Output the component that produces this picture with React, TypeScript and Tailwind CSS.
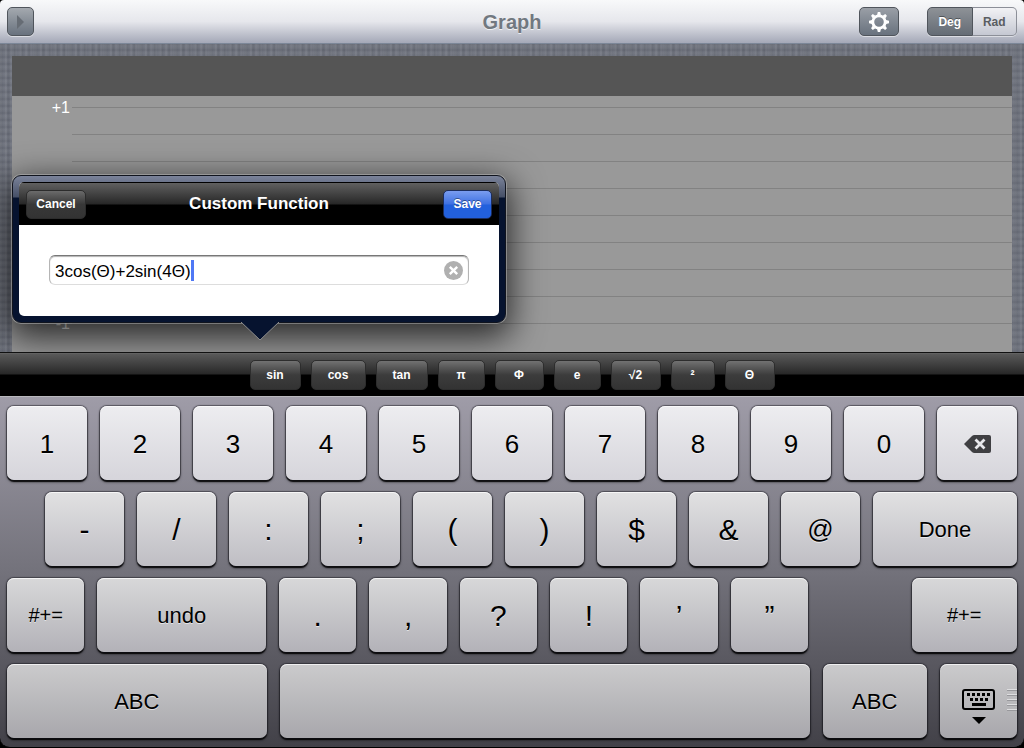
import React, { useState } from "react";
import clsx from "clsx";

const functionKeys = [
  { label: "sin", width: "w-[51px]" },
  { label: "cos", width: "w-[55px]" },
  { label: "tan", width: "w-[52px]" },
  { label: "π", width: "w-[47px]" },
  { label: "Φ", width: "w-[49px]" },
  { label: "e", width: "w-[47px]" },
  { label: "√2", width: "w-[50px]" },
  { label: "²", width: "w-[44px]" },
  { label: "Θ", width: "w-[50px]" },
];

const digits = ["1", "2", "3", "4", "5", "6", "7", "8", "9", "0"];
const symbols = ["-", "/", ":", ";", "(", ")", "$", "&", "@"];
const punctuation = [".", ",", "?", "!", "’", "”"];
const gridLines = [1, 2, 3, 4, 5, 6, 7, 8, 9];

// each keyboard row is a shade darker than the one above
const tones = {
  first: "from-[#ededf0] to-[#d6d5db] pt-[2px]",
  second: "from-[#e1e1e2] to-[#bfbec4]",
  third: "from-[#d8d8d9] to-[#b3b2b8]",
  fourth: "from-[#cbcbcc] to-[#a8a7ac]",
};

type KeyProps = {
  tone: keyof typeof tones;
  className?: string;
  label?: string;
  children?: React.ReactNode;
};

function Key({ tone, className, label, children }: KeyProps) {
  return (
    <button
      type="button"
      aria-label={label}
      className={clsx(
        "relative flex h-[74px] min-w-0 items-center justify-center rounded-[7px] bg-linear-to-b text-black",
        "shadow-[inset_0_1px_0_rgba(255,255,255,0.7),0_0_1px_1px_rgba(20,20,28,0.5),0_2px_1px_rgba(0,0,0,0.85),0_2px_3px_rgba(0,0,0,0.5)]",
        "[text-shadow:0_1px_0_rgba(255,255,255,0.6)]",
        tones[tone],
        className
      )}
    >
      {children}
    </button>
  );
}

function GearIcon() {
  const teeth = [0, 45, 90, 135, 180, 225, 270, 315];
  return (
    <svg viewBox="-10 -10 20 20" className="size-5">
      <circle r="6.2" fill="none" stroke="white" strokeWidth="2.800" />
      {teeth.map((angle) => (
        <path key={angle} d="M-1.900-7-1.200-10H1.200L1.900-7Z" fill="white" transform={`rotate(${angle})`} />
      ))}
    </svg>
  );
}

function BackspaceIcon() {
  return (
    <svg viewBox="0 0 27 18" className="h-[18px] w-[27px]">
      <path d="M0 9 8 1Q9 0 10.500 0H25Q27 0 27 2V16Q27 18 25 18H10.500Q9 18 8 17Z" fill="#3f3f42" />
      <path d="m11.500 4.500 9 9m0-9-9 9" stroke="#e8e8ec" strokeWidth="2.800" />
    </svg>
  );
}

function KeyboardIcon() {
  const upper = [5, 10, 15, 20, 25];
  const lower = [8, 13, 18, 23];
  return (
    <svg viewBox="0 0 33 36" className="mt-3 h-9 w-[33px]">
      <rect x="1" y="1" width="31" height="19" rx="2" fill="none" stroke="black" strokeWidth="2" />
      {upper.map((x) => (
        <rect key={x} x={x} y="4" width="3" height="3" />
      ))}
      {lower.map((x) => (
        <rect key={x} x={x} y="9" width="3" height="3" />
      ))}
      <rect x="10" y="14" width="14" height="3" />
      <path d="M10 28H24L17 35Z" />
    </svg>
  );
}

function Header() {
  return (
    <header className="grid h-11 grid-cols-[1fr_auto_1fr] items-center rounded-t-[4px] border-b border-[#7c8798] bg-linear-to-b from-[#f8f9fa] via-[#e6e7ec] to-[#a4a8b7] px-[7px]">
      <button
        type="button"
        aria-label="Show functions"
        className="flex h-[29px] w-[27px] items-center justify-center rounded-[5px] border border-[#50555c] bg-linear-to-b from-[#a4a9af] to-[#69727e] shadow-[0_1px_0_rgba(255,255,255,0.5)]"
      >
        <svg viewBox="0 0 7 14" className="h-[14px] w-[7px]">
          <path d="M0 0 7 7 0 14Z" fill="#666c74" />
        </svg>
      </button>
      <h1 className="text-[20px] font-bold text-[#717880] [text-shadow:0_1px_0_rgba(255,255,255,0.7)]">Graph</h1>
      <div className="flex items-center gap-7 justify-self-end">
        <button
          type="button"
          aria-label="Settings"
          className="flex h-[29px] w-10 items-center justify-center rounded-[5px] border border-[#50555c] bg-linear-to-b from-[#9a9fa6] to-[#69727e] shadow-[0_1px_0_rgba(255,255,255,0.5)]"
        >
          <GearIcon />
        </button>
        <div className="flex h-[29px] w-[90px] rounded-[5px] text-[12px] font-bold shadow-[0_1px_0_rgba(255,255,255,0.5)]">
          <button
            type="button"
            className="flex-1 rounded-l-[5px] border border-[#50555c] bg-linear-to-b from-[#8e9297] to-[#656c75] text-white [text-shadow:0_-1px_0_rgba(0,0,0,0.4)]"
          >
            Deg
          </button>
          <button
            type="button"
            className="flex-1 rounded-r-[5px] border border-l-0 border-[#8c8f98] bg-linear-to-b from-[#f2f2f5] to-[#c5c8d2] text-[#5a5d62]"
          >
            Rad
          </button>
        </div>
      </div>
    </header>
  );
}

function FunctionPopover() {
  const [value, setValue] = useState("3cos(Θ)+2sin(4Θ)");
  return (
    <section
      aria-label="Custom Function"
      className="absolute top-[131px] left-3 w-[494px] rounded-[9px] border border-[#10141e] bg-[linear-gradient(to_bottom,#7b839a_0px,#465067_21px,#06132f_22px)] p-[6px] shadow-[0_0_0_1px_rgba(190,190,190,0.5),0_10px_34px_4px_rgba(0,0,0,0.75)]"
    >
      <div className="overflow-hidden rounded-[5px] bg-white">
        <div className="grid h-[43px] grid-cols-[1fr_auto_1fr] items-center border-t border-black bg-[linear-gradient(to_bottom,#606060_0px,#272727_21px,#000_22px)] px-[7px]">
          <button
            type="button"
            className="h-[29px] w-[60px] rounded-[5px] border border-[#2c2c2c] bg-linear-to-b from-[#6b6b6b] via-[#383838] to-[#333] text-[12px] font-bold text-white"
          >
            Cancel
          </button>
          <h2 className="text-[17px] font-bold text-white">Custom Function</h2>
          <button
            type="button"
            className="h-[29px] w-[49px] justify-self-end rounded-[5px] border border-[#1c2d5c] bg-[linear-gradient(to_bottom,#7a9df0_0%,#3d70e2_49%,#2260dd_51%,#2260dd_100%)] text-[12px] font-bold text-white [text-shadow:0_-1px_0_rgba(0,0,0,0.4)]"
          >
            Save
          </button>
        </div>
        <div className="relative mx-[30px] mt-[30px] mb-[31px]">
          <input
            type="text"
            aria-label="Function"
            value={value}
            onChange={(e) => setValue(e.target.value)}
            className="block h-[30px] w-full rounded-[6px] border border-[#b5b5b5] border-t-[#777] border-b-[#ddd] bg-white pt-[3px] pr-8 pl-[5px] text-[17px] text-black caret-[#4f78f5] shadow-[inset_0_1px_1px_rgba(0,0,0,0.3)] outline-none"
          />
          <span className="absolute top-[5px] left-[142px] h-[21px] w-[3px] bg-[#4f78f5]" />
          <button type="button" aria-label="Clear text" onClick={() => setValue("")} className="absolute top-[6px] right-[6px]">
            <svg viewBox="0 0 19 19" className="size-[19px]">
              <circle cx="9.500" cy="9.500" r="9.500" fill="#b0b0b0" />
              <path d="m5.800 5.800 7.400 7.400m0-7.400-7.400 7.400" stroke="white" strokeWidth="2.400" />
            </svg>
          </button>
        </div>
      </div>
      <svg viewBox="0 0 38 19" className="absolute top-full left-[228px] h-[19px] w-[38px]">
        <path d="M0 0H38L19 18Z" fill="#06132f" />
        <path d="M0 0 19 18 38 0" fill="none" stroke="#8d8d8d" strokeWidth="1" />
      </svg>
    </section>
  );
}

function Graph() {
  return (
    <main className="relative flex min-h-[308px] flex-1 flex-col overflow-hidden bg-[#6b6f7a] bg-[repeating-linear-gradient(90deg,transparent_0px,rgba(255,255,255,0.08)_1px,transparent_2px,transparent_5px),repeating-linear-gradient(90deg,transparent_0px,rgba(0,0,0,0.06)_1px,transparent_3px,rgba(255,255,255,0.04)_6px,transparent_7px),repeating-linear-gradient(0deg,transparent_0px,rgba(0,0,0,0.07)_1px,transparent_2px,rgba(255,255,255,0.05)_5px,transparent_7px)] px-3 pt-3">
      <div className="h-10 bg-[#555]" />
      <div className="flex flex-1 bg-[#999]">
        <div className="flex w-[60px] flex-col gap-[192px] pr-[2px] text-right text-[16px] leading-6 text-white">
          <span>+1</span>
          <span>-1</span>
        </div>
        <div className="flex flex-1 flex-col gap-[26px] pt-[11px]">
          {gridLines.map((line) => (
            <div key={line} className="h-px bg-[#828282]" />
          ))}
        </div>
      </div>
      <FunctionPopover />
    </main>
  );
}

function FunctionBar() {
  return (
    <div className="flex h-11 items-center justify-center gap-[10px] border-t border-[#111] bg-[linear-gradient(to_bottom,#6b6b6b_0px,#595959_1px,#282828_21px,#000_22px)] shadow-[0_-1px_0_#777]">
      {functionKeys.map((key) => (
        <button
          key={key.label}
          type="button"
          className={clsx(
            "h-[30px] rounded-[5px] border border-[#2d2d2d] bg-linear-to-b from-[#727272] via-[#3c3c3c] to-[#333] text-[12px] font-bold text-white",
            key.width
          )}
        >
          {key.label}
        </button>
      ))}
    </div>
  );
}

function Keyboard() {
  return (
    <div className="flex flex-col gap-3 rounded-b-[10px] border-t border-b border-t-[#b9b8bd] border-b-black bg-linear-to-b from-[#9f9ca8] via-[#73727b] to-[#424148] px-[7px] pt-[9px] pb-[9px]">
      <div className="flex gap-[13px]">
        {digits.map((digit) => (
          <Key key={digit} tone="first" className="flex-1 text-[26px]">
            {digit}
          </Key>
        ))}
        <Key tone="first" label="Delete" className="flex-1">
          <BackspaceIcon />
        </Key>
      </div>
      <div className="flex gap-[13px] pl-[38px]">
        {symbols.map((symbol) => (
          <Key key={symbol} tone="second" className={clsx("flex-[79]", symbol === "@" ? "text-[26px]" : "text-[30px]")}>
            {symbol}
          </Key>
        ))}
        <Key tone="second" className="flex-[144] text-[22px]">
          Done
        </Key>
      </div>
      <div className="flex gap-[13px]">
        <Key tone="third" className="flex-[77] text-[20px]">
          #+=
        </Key>
        <Key tone="third" className="flex-[168] text-[22px]">
          undo
        </Key>
        {punctuation.map((mark) => (
          <Key key={mark} tone="third" className="flex-[77] text-[30px]">
            {mark}
          </Key>
        ))}
        <div className="flex-[77]" />
        <Key tone="third" className="flex-[105] text-[20px]">
          #+=
        </Key>
      </div>
      <div className="flex gap-[13px]">
        <Key tone="fourth" className="flex-[259] text-[22px]">
          ABC
        </Key>
        <Key tone="fourth" label="Space" className="flex-[529]" />
        <Key tone="fourth" className="flex-[104] text-[22px]">
          ABC
        </Key>
        <Key tone="fourth" label="Hide keyboard" className="flex-[77]">
          <KeyboardIcon />
          <svg viewBox="0 0 10 24" className="absolute top-[25px] right-0 h-6 w-[10px]">
            <path d="M0 1.500H10M0 6.500H10M0 11.500H10M0 16.500H10M0 21.500H10" stroke="#98989c" />
            <path d="M0 0.500H10M0 5.500H10M0 10.500H10M0 15.500H10M0 20.500H10" stroke="#dedee0" />
          </svg>
        </Key>
      </div>
    </div>
  );
}

export default function App() {
  return (
    <div className="flex min-h-screen flex-col bg-black font-['Liberation_Sans',Arial,sans-serif]">
      <Header />
      <Graph />
      <FunctionBar />
      <Keyboard />
    </div>
  );
}
